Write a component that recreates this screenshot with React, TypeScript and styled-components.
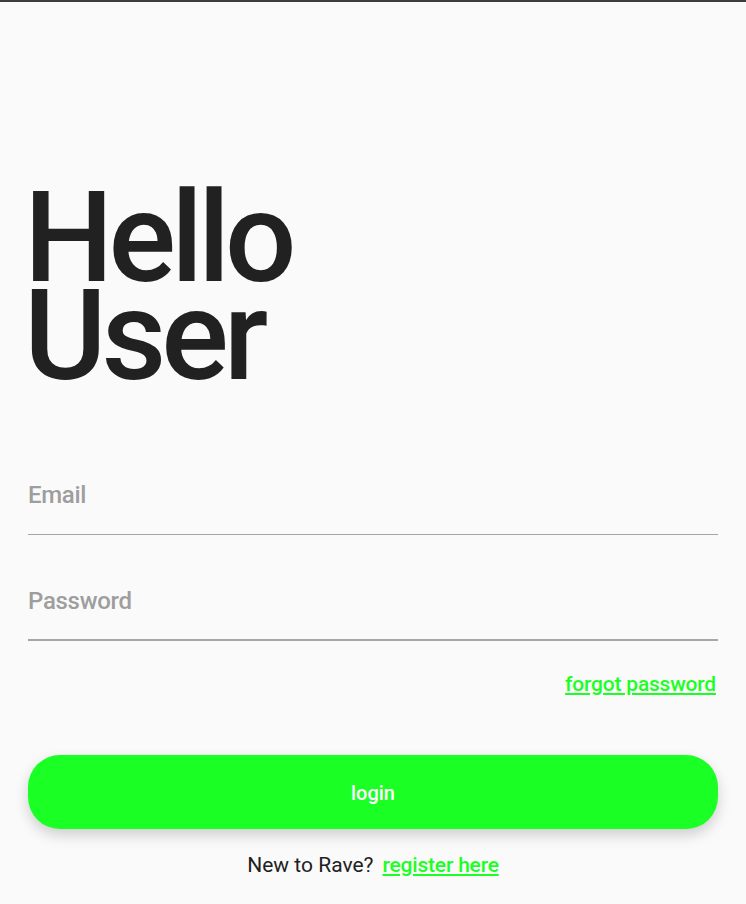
import React from 'react'
import styled, { createGlobalStyle } from 'styled-components';

const GREEN = '#1aff24';

const GlobalStyle = createGlobalStyle`
  html, body {
    margin: 0;
    padding: 0;
    background: #fafafa;
    font-family: Roboto, "Liberation Sans", sans-serif;
  }
`;

const Screen = styled.div`
  box-sizing: border-box;
  width: 746px;
  min-height: 904px;
  border-top: 2px solid #3c3c3c;
  padding: 0 28px;
  display: flex;
  flex-direction: column;
`;

const Title = styled.h1`
  margin: 187px 0 0 -4px;
  font-size: 126px;
  font-weight: 500;
  line-height: 98px;
  letter-spacing: -5px;
  color: #212121;
`;

const Field = styled.div<{thick?: boolean}>`
  height: ${({thick}) => thick ? 52 : 53}px;
  border-bottom: ${({thick}) => thick ? 2 : 1.5}px solid #a6a6a6;
  display: flex;
  align-items: flex-start;
`;

const Placeholder = styled.span`
  font-size: 24px;
  font-weight: 500;
  color: #9e9e9e;
  line-height: 28px;
  letter-spacing: -0.3px;
`;

const Form = styled.div`
  margin-top: 96px;
  display: flex;
  flex-direction: column;
  gap: 52px;
`;

const Link = styled.a`
  color: ${GREEN};
  font-weight: 500;
  font-size: 21px;
  letter-spacing: -0.2px;
  text-decoration: underline;
  text-underline-offset: 2px;
`;

const ForgotRow = styled.div`
  display: flex;
  justify-content: flex-end;
  margin-top: 29px;
  padding-right: 2px;
  line-height: 28px;
`;

const LoginButton = styled.button`
  margin-top: 57px;
  height: 74px;
  border: none;
  border-radius: 32px;
  background: ${GREEN};
  color: #fff;
  font-family: inherit;
  font-size: 20px;
  font-weight: 500;
  padding-top: 3px;
  box-shadow: 0 6px 14px rgba(0, 0, 0, 0.18);
`;

const Footer = styled.div`
  margin-top: 23px;
  display: flex;
  justify-content: center;
  gap: 9px;
  font-size: 21px;
  color: #212121;
  line-height: 26px;
`;

export default function App() {
  return (
    <Screen>
      <GlobalStyle />
      <Title>Hello<br />User</Title>
      <Form>
        <Field><Placeholder>Email</Placeholder></Field>
        <Field thick><Placeholder>Password</Placeholder></Field>
      </Form>
      <ForgotRow><Link>forgot password</Link></ForgotRow>
      <LoginButton>login</LoginButton>
      <Footer>
        <span>New to Rave?</span>
        <Link>register here</Link>
      </Footer>
    </Screen>
  )
}
